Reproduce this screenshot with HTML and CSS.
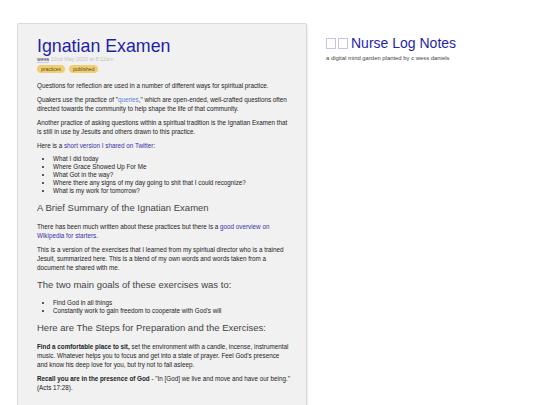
FILE: index.html
```html
<!DOCTYPE html>
<html lang="en">

<head>
    <meta charset="UTF-8">
    <meta name="viewport" content="width=device-width, initial-scale=1.0">
    <title>Ignatian Examen - Nurse Log Notes</title>
    <link rel="stylesheet" href="styles.css">
</head>

<body>
    <div class="layout">
        <article class="note">
            <h1 class="note-title">Ignatian Examen</h1>
            <div class="meta">
                <a class="author" href="#">wess</a>
                <span class="date">22nd May 2020 at 8:12am</span>
            </div>
            <div class="tags">
                <span class="tag">practices</span>
                <span class="tag">published</span>
            </div>

            <p>Questions for reflection are used in a number of different ways for spiritual practice.</p>
            <p>Quakers use the practice of "<a class="link-light" href="#">queries</a>," which are open-ended, well-crafted questions often directed towards the community to help shape the life of that community.</p>
            <p>Another practice of asking questions within a spiritual tradition is the Ignatian Examen that is still in use by Jesuits and others drawn to this practice.</p>
            <p>Here is a <a href="#">short version I shared on Twitter</a>:</p>
            <ul>
                <li>What I did today</li>
                <li>Where Grace Showed Up For Me</li>
                <li>What Got in the way?</li>
                <li>Where there any signs of my day going to shit that I could recognize?</li>
                <li>What is my work for tomorrow?</li>
            </ul>

            <h2>A Brief Summary of the Ignatian Examen</h2>
            <p>There has been much written about these practices but there is a <a href="#">good overview on Wikipedia for starters</a>.</p>
            <p>This is a version of the exercises that I learned from my spiritual director who is a trained Jesuit, summarized here. This is a blend of my own words and words taken from a document he shared with me.</p>

            <h3>The two main goals of these exercises was to:</h3>
            <ul>
                <li>Find God in all things</li>
                <li>Constantly work to gain freedom to cooperate with God's will</li>
            </ul>

            <h3>Here are The Steps for Preparation and the Exercises:</h3>
            <p><strong>Find a comfortable place to sit,</strong> set the environment with a candle, incense, instrumental music. Whatever helps you to focus and get into a state of prayer. Feel God's presence and know his deep love for you, but try not to fall asleep.</p>
            <p><strong>Recall you are in the presence of God</strong> - "In [God] we live and move and have our being." (Acts 17:28).</p>
        </article>

        <aside class="site">
            <h1 class="site-title"><span class="tofu"></span><span class="tofu"></span><a href="#">Nurse Log Notes</a></h1>
            <p class="tagline">a digital mind garden planted by c wess daniels</p>
        </aside>
    </div>
</body>

</html>
```

FILE: styles.css
```css
body {
    margin: 0;
    padding: 23px 0 0 17px;
    background: white;
    font-family: "Liberation Sans", Arial, sans-serif;
    color: #222;
}

a {
    color: #3a30a8;
    text-decoration: none;
}

.layout {
    display: flex;
    align-items: flex-start;
    gap: 19px;
}

.note {
    width: 254px;
    padding: 12px 15px 30px 19px;
    background: #f1f1f1;
    border: 1px solid #dadada;
    border-radius: 2px;
    box-shadow: 1px 1px 2px rgba(0, 0, 0, 0.08);
    font-size: 6.3px;
    line-height: 9px;
}

.note-title {
    margin: 0;
    font-size: 17.8px;
    line-height: 20px;
    font-weight: normal;
    color: #1f1fa8;
}

.meta {
    font-size: 5.4px;
    line-height: 7px;
}

.meta .author {
    color: #334;
    border-bottom: 1px solid #c8c8f0;
}

.meta .date {
    color: #c4c4c4;
}

.tags {
    display: flex;
    gap: 4px;
    margin-top: 2px;
}

.tag {
    background: #f0cf72;
    color: #5a4a20;
    font-size: 5px;
    line-height: 8px;
    padding: 0 4px;
    border-radius: 5px;
}

.note p {
    margin: 5px 0;
}

.note .tags + p {
    margin-top: 8px;
}

.link-light {
    color: #5a7ee0;
}

.note ul {
    margin: 5px 0;
    padding-left: 16px;
}

.note li {
    line-height: 8px;
}

.note h2,
.note h3 {
    font-weight: normal;
    color: #444;
    margin: 7px 0 8px;
    font-size: 9.5px;
    line-height: 12px;
}

.site {
    padding-top: 11px;
}

.site-title {
    margin: 0;
    display: flex;
    align-items: center;
    font-size: 14px;
    line-height: 18px;
    font-weight: normal;
}

.site-title a {
    color: #1f1fa8;
    margin-left: 1px;
}

.tofu {
    width: 8px;
    height: 9px;
    border: 1px solid #c3c6e6;
    margin-right: 2px;
}

.tagline {
    margin: 3px 0 0;
    font-size: 5.9px;
    color: #444;
}
```
